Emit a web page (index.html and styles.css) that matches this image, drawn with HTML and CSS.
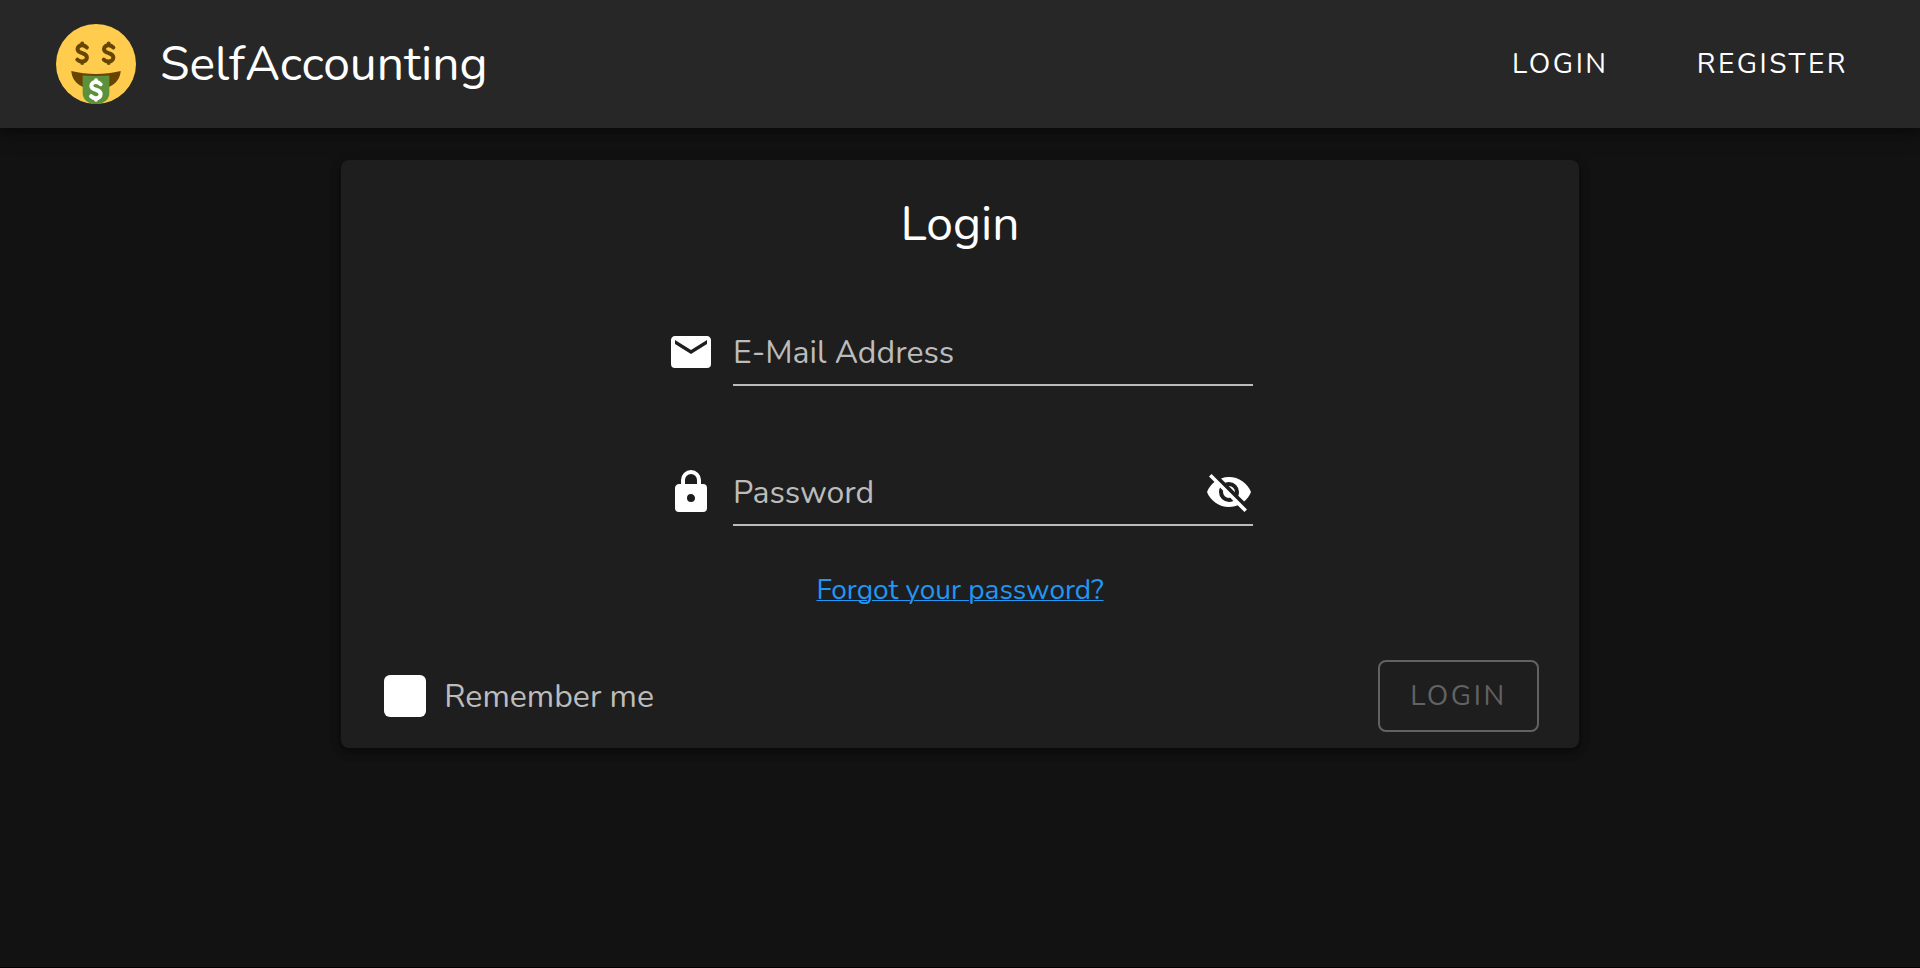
FILE: index.html
```html
<!DOCTYPE html>
<html lang="en">
<head>
<meta charset="utf-8">
<meta name="viewport" content="width=device-width, initial-scale=1">
<title>SelfAccounting</title>
<link rel="stylesheet" href="styles.css">
</head>
<body>
<header class="app-bar">
  <div class="brand">
    <svg class="brand-logo" viewBox="0 0 36 36" aria-hidden="true">
      <defs>
        <path id="dollar" fill="none" stroke-width="1.8" stroke-linecap="round" stroke-linejoin="round" d="M2.1-2.6C1.5-3.3.8-3.6 0-3.6-1.2-3.6-2.1-2.9-2.1-1.9-2.1-.8-1.2-.4 0-.1 1.3.3 2.1.8 2.1 1.9 2.1 3 1.1 3.7 0 3.7-.9 3.7-1.6 3.4-2.2 2.8M0-4.4V-3.6M0 3.7V4.4"/>
      </defs>
      <circle cx="18" cy="18" r="18" fill="#ffcc4d"/>
      <path fill="#664500" d="M6.9 21.2C10.5 22.1 14.2 22.5 18 22.5S25.5 22.1 29.1 21.2C28.9 25.5 25.3 29.4 18 29.4S7.100 25.500 6.900 21.200Z"/>
      <path fill="#5c913b" d="M12 23.200Q18 23.600 24 23.200V31C24 34 21.500 36 18 36S12 34 12 31Z"/>
      <use href="#dollar" x="11.800" y="13.200" stroke="#664500"/>
      <use href="#dollar" x="23.700" y="13.200" stroke="#664500"/>
      <use href="#dollar" x="18" y="29.700" stroke="#fff"/>
    </svg>
    <span class="brand-name">SelfAccounting</span>
  </div>
  <nav class="nav">
    <a class="nav-link" href="#login">Login</a>
    <a class="nav-link" href="#register">Register</a>
  </nav>
</header>
<main class="page">
  <form class="card">
    <h1 class="card-title">Login</h1>
    <div class="fields">
      <div class="field">
        <svg class="icon" viewBox="0 0 24 24" aria-hidden="true"><path d="M20 8L12 13L4 8V6L12 11L20 6M20 4H4C2.890 4 2 4.890 2 6V18A2 2 0 0 0 4 20H20A2 2 0 0 0 22 18V6C22 4.890 21.100 4 20 4Z"/></svg>
        <div class="field-box">
          <input class="field-input" type="email" placeholder="E-Mail Address" aria-label="E-Mail Address">
        </div>
      </div>
      <div class="field">
        <svg class="icon" viewBox="0 0 24 24" aria-hidden="true"><path d="M12 17A2 2 0 0 0 14 15C14 13.890 13.100 13 12 13A2 2 0 0 0 10 15A2 2 0 0 0 12 17M18 8A2 2 0 0 1 20 10V20A2 2 0 0 1 18 22H6A2 2 0 0 1 4 20V10C4 8.890 4.900 8 6 8H7V6A5 5 0 0 1 12 1A5 5 0 0 1 17 6V8H18M12 3A3 3 0 0 0 9 6V8H15V6A3 3 0 0 0 12 3Z"/></svg>
        <div class="field-box">
          <input class="field-input" type="password" placeholder="Password" aria-label="Password">
          <button class="icon-button" type="button" aria-label="Show password">
            <svg class="icon" viewBox="0 0 24 24" aria-hidden="true"><path d="M11.83 9L15 12.160C15 12.110 15 12.050 15 12A3 3 0 0 0 12 9C11.940 9 11.890 9 11.830 9M7.530 9.800L9.080 11.350C9.030 11.560 9 11.770 9 12A3 3 0 0 0 12 15C12.220 15 12.440 14.970 12.650 14.920L14.200 16.470C13.530 16.800 12.790 17 12 17A5 5 0 0 1 7 12C7 11.210 7.200 10.470 7.530 9.800M2 4.270L4.280 6.550L4.730 7C3.080 8.300 1.780 10 1 12C2.730 16.390 7 19.500 12 19.500C13.550 19.500 15.030 19.200 16.380 18.660L16.810 19.080L19.730 22L21 20.730L3.270 3M12 7A5 5 0 0 1 17 12C17 12.640 16.870 13.260 16.640 13.820L19.570 16.750C21.070 15.500 22.270 13.860 23 12C21.270 7.610 17 4.500 12 4.500C10.600 4.500 9.260 4.750 8 5.200L10.170 7.350C10.740 7.130 11.350 7 12 7Z"/></svg>
          </button>
        </div>
      </div>
    </div>
    <a class="forgot" href="#forgot">Forgot your password?</a>
    <div class="actions">
      <label class="remember"><input class="remember-box" type="checkbox"><span class="remember-text">Remember me</span></label>
      <button class="submit" type="submit" disabled>Login</button>
    </div>
  </form>
</main>
</body>
</html>
```
FILE: styles.css
```css
* {
  box-sizing: border-box;
}

html {
  background: #000;
}

body {
  margin: 0;
  min-height: calc(100vh - 1px);
  background: #121212;
  color: #fff;
  font-family: Nunito, Lato, sans-serif;
  font-size: 32px;
}

.app-bar {
  display: flex;
  align-items: center;
  justify-content: space-between;
  height: 128px;
  padding: 0 40px 0 56px;
  background: #272727;
  box-shadow: 0 4px 8px rgba(0, 0, 0, 0.3), 0 8px 20px rgba(0, 0, 0, 0.2);
}

.brand {
  display: flex;
  align-items: center;
  gap: 24px;
}

.brand-logo {
  width: 80px;
  height: 80px;
}

.brand-name {
  font-size: 48px;
  line-height: 64px;
}

.nav {
  display: flex;
  gap: 24px;
}

.nav-link {
  padding: 16px 32px;
  color: #fff;
  font-size: 28px;
  line-height: 40px;
  letter-spacing: 0.09em;
  text-decoration: none;
  text-transform: uppercase;
}

.page {
  display: flex;
  justify-content: center;
  padding: 32px;
}

.card {
  display: flex;
  flex-direction: column;
  align-items: center;
  width: calc(100% * 2 / 3);
  padding: 32px 40px 16px;
  border-radius: 8px;
  background: #1e1e1e;
  box-shadow: 0 4px 8px rgba(0, 0, 0, 0.4), 0 2px 12px rgba(0, 0, 0, 0.24);
}

.card-title {
  margin: 0;
  font-size: 48px;
  font-weight: 400;
  line-height: 64px;
}

.fields {
  display: flex;
  flex-direction: column;
  gap: 76px;
  width: 100%;
  max-width: 586px;
  margin-top: 66px;
}

.field {
  display: flex;
  gap: 18px;
}

.icon {
  display: block;
  flex: none;
  width: 48px;
  height: 48px;
  margin-top: 6px;
  fill: #fff;
}

.field-box {
  display: flex;
  flex: 1;
  min-width: 0;
  height: 64px;
  border-bottom: 2px solid #bcbcbc;
}

.field-input {
  flex: 1;
  min-width: 0;
  padding: 0 0 2px;
  border: 0;
  outline: 0;
  background: transparent;
  color: #fff;
  font: inherit;
}

.field-input::placeholder {
  color: #bcbcbc;
  opacity: 1;
}

.icon-button {
  padding: 0 0 2px;
  border: 0;
  background: transparent;
}

.icon-button .icon {
  margin: 0;
}

.forgot {
  margin-top: 44px;
  color: #2196f3;
  font-size: 28px;
  line-height: 40px;
  text-decoration-thickness: 1px;
}

.actions {
  display: flex;
  align-items: center;
  justify-content: space-between;
  width: 100%;
  margin-top: 50px;
}

.remember {
  display: flex;
  align-items: center;
  gap: 18px;
  color: #bcbcbc;
  line-height: 40px;
}

.remember-text {
  padding-top: 2px;
}

.remember-box {
  width: 42px;
  height: 42px;
  margin: 0 0 0 3px;
  border-radius: 6px;
  background: #fff;
  appearance: none;
}

.submit {
  height: 72px;
  min-width: 160px;
  padding: 0 30px;
  border: 2px solid #626262;
  border-radius: 8px;
  background: transparent;
  color: #626262;
  font: inherit;
  font-size: 28px;
  letter-spacing: 0.09em;
  text-transform: uppercase;
}
```
